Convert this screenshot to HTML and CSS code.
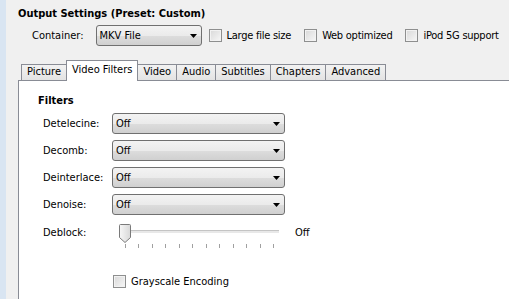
FILE: index.html
```html
<!DOCTYPE html>
<html lang="en">
<head>
    <meta charset="UTF-8">
    <meta name="viewport" content="width=device-width, initial-scale=1.0">
    <title>Output Settings</title>
    <link rel="stylesheet" href="styles.css">
</head>
<body>
    <div class="edge"></div>
    <div class="main">
        <h1>Output Settings (Preset: Custom)</h1>

        <div class="container-row">
            <span class="row-label">Container:</span>
            <div class="select container-select">
                <span>MKV File</span>
                <svg class="arrow" width="7" height="4" viewBox="0 0 7 4"><path d="M0 0h7L3.5 4z" fill="#000"/></svg>
            </div>
            <label class="check"><span class="box"></span>Large file size</label>
            <label class="check"><span class="box"></span>Web optimized</label>
            <label class="check"><span class="box"></span>iPod 5G support</label>
        </div>

        <div class="tabs">
            <div class="tab">Picture</div>
            <div class="tab active">Video Filters</div>
            <div class="tab">Video</div>
            <div class="tab">Audio</div>
            <div class="tab">Subtitles</div>
            <div class="tab">Chapters</div>
            <div class="tab">Advanced</div>
        </div>

        <div class="panel">
            <h2>Filters</h2>
            <div class="filters">
                <span>Detelecine:</span>
                <div class="select">
                    <span>Off</span>
                    <svg class="arrow" width="7" height="4" viewBox="0 0 7 4"><path d="M0 0h7L3.5 4z" fill="#000"/></svg>
                </div>

                <span>Decomb:</span>
                <div class="select">
                    <span>Off</span>
                    <svg class="arrow" width="7" height="4" viewBox="0 0 7 4"><path d="M0 0h7L3.5 4z" fill="#000"/></svg>
                </div>

                <span>Deinterlace:</span>
                <div class="select">
                    <span>Off</span>
                    <svg class="arrow" width="7" height="4" viewBox="0 0 7 4"><path d="M0 0h7L3.5 4z" fill="#000"/></svg>
                </div>

                <span>Denoise:</span>
                <div class="select">
                    <span>Off</span>
                    <svg class="arrow" width="7" height="4" viewBox="0 0 7 4"><path d="M0 0h7L3.5 4z" fill="#000"/></svg>
                </div>

                <span class="deblock-label">Deblock:</span>
                <div class="deblock">
                    <div class="slider">
                        <div class="slider-body">
                            <div class="track"></div>
                            <svg class="thumb" width="12" height="19" viewBox="0 0 12 19">
                                <defs>
                                    <linearGradient id="thumbFill" x1="0" y1="0" x2="1" y2="0">
                                        <stop offset="0" stop-color="#f7f7f7"/>
                                        <stop offset="1" stop-color="#d8d8d8"/>
                                    </linearGradient>
                                </defs>
                                <path d="M1.5 0.5h9a1 1 0 0 1 1 1v12l-5.5 5-5.5-5v-12a1 1 0 0 1 1-1z" fill="url(#thumbFill)" stroke="#7a7a7a"/>
                            </svg>
                        </div>
                        <div class="ticks">
                            <i></i><i></i><i></i><i></i><i></i><i></i>
                            <i></i><i></i><i></i><i></i><i></i><i></i>
                        </div>
                    </div>
                    <span class="deblock-value">Off</span>
                </div>
            </div>

            <label class="check grayscale"><span class="box"></span>Grayscale Encoding</label>
        </div>
    </div>
</body>
</html>
```

FILE: styles.css
```css
body {
    margin: 0;
    height: 299px;
    overflow: hidden;
    display: flex;
    background-color: #f0f0f0;
    font-family: "DejaVu Sans Condensed", "DejaVu Sans", sans-serif;
    font-size: 11px;
    color: #000;
}
.edge {
    width: 6px;
    flex: none;
    background-color: #d9e5f2;
}
.main {
    flex: 1;
    min-width: 0;
    display: flex;
    flex-direction: column;
    padding: 7px 0 0 12px;
}
h1 {
    margin: 0;
    font-size: 11px;
    line-height: 13px;
    font-weight: bold;
}
.container-row {
    display: flex;
    align-items: center;
    height: 21px;
    margin-top: 5px;
    padding-left: 14px;
    white-space: nowrap;
}
.row-label {
    margin-right: 12px;
}
.select {
    box-sizing: border-box;
    height: 21px;
    display: flex;
    align-items: center;
    justify-content: space-between;
    padding: 0 4px 0 3px;
    border: 1px solid #707070;
    border-radius: 3px;
    background: linear-gradient(#f3f3f3 0%, #ebebeb 50%, #dddddd 51%, #d0d0d0 100%);
}
.container-select {
    flex: none;
    width: 106px;
}
.check {
    flex: none;
    display: flex;
    align-items: center;
    gap: 5px;
    margin-left: 13px;
    white-space: nowrap;
    letter-spacing: -0.25px;
}
.container-select + .check {
    margin-left: 7px;
}
.box {
    box-sizing: border-box;
    width: 13px;
    height: 13px;
    border: 1px solid #8e8f8f;
    background: linear-gradient(135deg, #d8d8d8, #f7f7f7);
    box-shadow: inset 0 0 0 1px #f2f2f2;
}
.tabs {
    display: flex;
    align-items: flex-end;
    height: 20px;
    margin-top: 14px;
    padding-left: 3px;
}
.tab {
    box-sizing: border-box;
    height: 16px;
    line-height: 14px;
    padding: 0 5px;
    margin-right: -1px;
    border: 1px solid #898c95;
    border-bottom: none;
    background: linear-gradient(#f2f2f2, #e3e3e3);
}
.tab.active {
    position: relative;
    z-index: 1;
    height: 21px;
    line-height: 18px;
    margin-bottom: -1px;
    padding: 0 5px;
    background: #fff;
}
.panel {
    flex: 1;
    border-top: 1px solid #898c95;
    border-left: 1px solid #898c95;
    background-color: #fff;
    padding: 13px 0 0 19px;
}
h2 {
    margin: 0;
    font-size: 11px;
    line-height: 13px;
    font-weight: bold;
}
.filters {
    display: grid;
    grid-template-columns: 69px 173px;
    grid-template-rows: repeat(4, 21px) 32px;
    row-gap: 6px;
    align-items: center;
    margin: 6px 0 0 5px;
}
.deblock-label {
    align-self: start;
    margin-top: 5px;
}
.deblock {
    align-self: start;
    display: flex;
    margin-top: 3px;
}
.slider {
    flex: none;
    width: 160px;
    margin-left: 7px;
}
.slider-body {
    position: relative;
    height: 20px;
}
.track {
    position: absolute;
    left: 8px;
    right: 0;
    top: 6px;
    height: 2px;
    border-top: 1px solid #c4c4c4;
    background-color: #e8e8e8;
}
.thumb {
    position: absolute;
    left: 0;
    top: 0;
}
.ticks {
    display: flex;
    justify-content: space-between;
    width: 149px;
    margin-left: 6px;
}
.ticks i {
    width: 1px;
    height: 4px;
    background-color: #a0a0a0;
}
.deblock-value {
    flex: none;
    margin: 2px 0 0 16px;
}
.grayscale {
    margin: 22px 0 0 75px;
    letter-spacing: normal;
}
```
